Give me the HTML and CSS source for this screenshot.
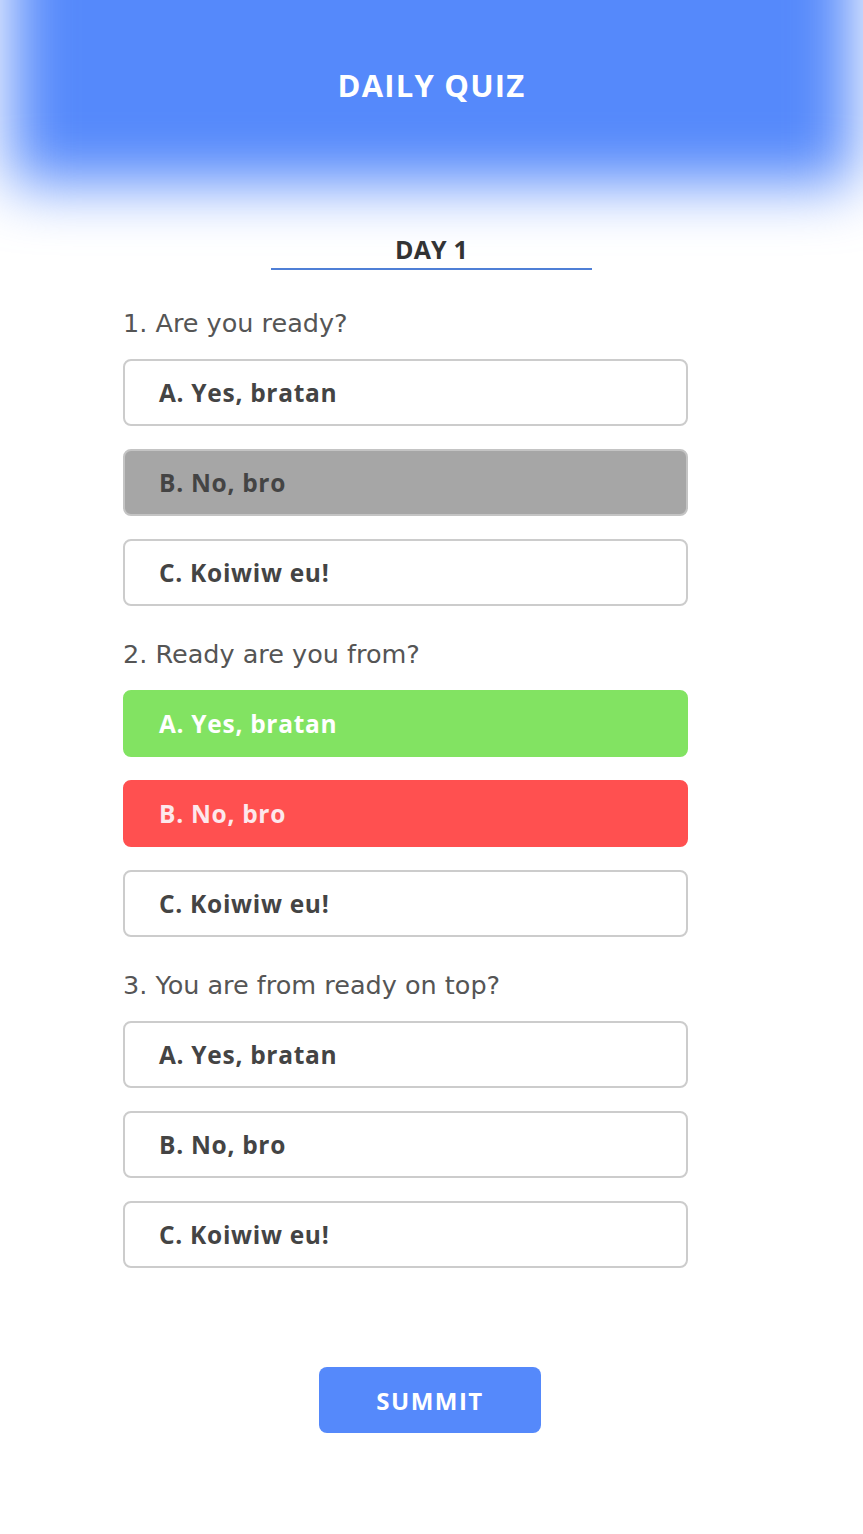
FILE: index.html
```html
<!DOCTYPE html>
<html lang="en">
<head>
<meta charset="utf-8">
<title>Daily Quiz</title>
<link rel="stylesheet" href="styles.css">
</head>
<body>
<header class="header">
  <h1 class="header-title">DAILY QUIZ</h1>
</header>
<main class="quiz">
  <h2 class="day-title">DAY 1</h2>
  <section class="question">
    <p class="question-text">1. Are you ready?</p>
    <div class="options">
      <div class="option">A. Yes, bratan</div>
      <div class="option option-selected">B. No, bro</div>
      <div class="option">C. Koiwiw eu!</div>
    </div>
  </section>
  <section class="question">
    <p class="question-text">2. Ready are you from?</p>
    <div class="options">
      <div class="option option-correct">A. Yes, bratan</div>
      <div class="option option-wrong">B. No, bro</div>
      <div class="option">C. Koiwiw eu!</div>
    </div>
  </section>
  <section class="question">
    <p class="question-text">3. You are from ready on top?</p>
    <div class="options">
      <div class="option">A. Yes, bratan</div>
      <div class="option">B. No, bro</div>
      <div class="option">C. Koiwiw eu!</div>
    </div>
  </section>
  <div class="actions">
    <button class="submit" type="button">SUMMIT</button>
  </div>
</main>
</body>
</html>
```

FILE: styles.css
```css
* { box-sizing: border-box; }

body {
  margin: 0;
  background: #ffffff;
  font-family: "Open Sans", "Liberation Sans", sans-serif;
}

.header {
  position: relative;
  height: 170px;
  display: flex;
  align-items: center;
  justify-content: center;
}

.header::before {
  content: "";
  position: absolute;
  left: 10px;
  right: 10px;
  top: -80px;
  bottom: -14px;
  background: #5589fb;
  filter: blur(30px);
}

.header-title {
  position: relative;
  margin: 0;
  color: #ffffff;
  font-size: 31px;
  line-height: 36px;
  font-weight: 700;
  letter-spacing: 1.2px;
}

.quiz {
  width: 617px;
  margin: 0 auto;
  padding-bottom: 100px;
}

.day-title {
  width: 321px;
  margin: 64px auto 0;
  padding-bottom: 4px;
  border-bottom: 2px solid #4f7fd6;
  text-align: center;
  color: #333333;
  font-size: 25px;
  line-height: 30px;
  font-weight: 700;
  letter-spacing: 0.2px;
}

.question {
  margin-top: 34px;
}

.question:first-of-type {
  margin-top: 39px;
}

.question-text {
  margin: 0 0 22px;
  color: #555555;
  font-family: "DejaVu Sans", sans-serif;
  font-size: 25.5px;
  line-height: 28px;
}

.options {
  width: 565px;
  display: flex;
  flex-direction: column;
  gap: 23px;
}

.option {
  height: 67px;
  display: flex;
  align-items: center;
  padding-left: 34px;
  border: 2px solid #cccccc;
  border-radius: 8px;
  background: #ffffff;
  color: #444444;
  font-size: 24.5px;
  font-weight: 700;
  letter-spacing: 0.7px;
}

.option-selected {
  background: #a6a6a6;
  border-color: #c4c4c4;
}

.option-correct {
  background: #82e362;
  border-color: #82e362;
  color: #ffffff;
}

.option-wrong {
  background: #ff5050;
  border-color: #ff5050;
  color: #fde8ec;
}

.actions {
  display: flex;
  justify-content: center;
  margin-top: 99px;
  padding-right: 3px;
}

.submit {
  width: 222px;
  height: 66px;
  border: none;
  border-radius: 8px;
  background: #5589fb;
  color: #ffffff;
  font-family: "Open Sans", "Liberation Sans", sans-serif;
  font-size: 24px;
  font-weight: 700;
  letter-spacing: 1.5px;
}
```
